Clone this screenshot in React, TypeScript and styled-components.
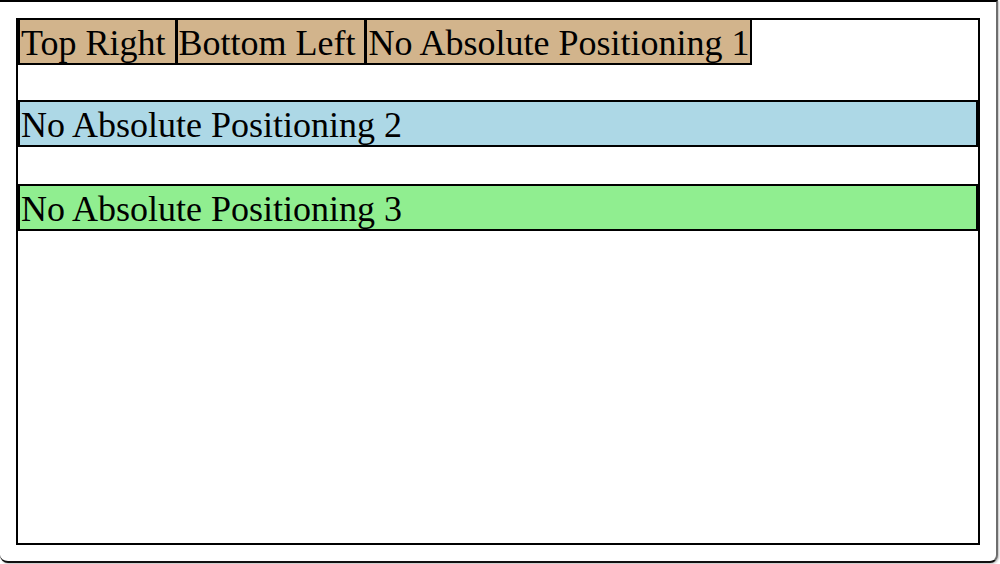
import React from "react";
import styled, { createGlobalStyle } from "styled-components";

const GlobalStyle = createGlobalStyle`
  html, body {
    margin: 0;
    padding: 0;
    background: #ffffff;
  }
  body {
    width: 1000px;
    height: 564px;
    overflow: hidden;
  }
`;

const WindowFrame = styled.div`
  box-sizing: border-box;
  width: 998px;
  height: 563px;
  border-top: 2px solid #000000;
  border-right: 2px solid #6e6e6e;
  border-bottom: 2px solid #111111;
  border-radius: 0 0 8px 8px;
  box-shadow: 1px 1px 2px rgba(0, 0, 0, 0.25);
  background: #ffffff;
  padding: 16px 0 0 16px;
`;

const Container = styled.div`
  box-sizing: border-box;
  width: 964px;
  height: 527px;
  border: 2px solid #000000;
  display: flex;
  flex-direction: column;
  font-family: "Liberation Serif", "Times New Roman", serif;
  font-size: 36px;
  color: #000000;
`;

const TagRow = styled.div`
  display: flex;
  align-items: flex-start;
  margin-top: -2px;
`;

const Tag = styled.div`
  box-sizing: border-box;
  height: 47px;
  padding: 4px 0 0 1px;
  line-height: 39px;
  border: 2px solid #000000;
  background: #d2b48c;
  white-space: pre;
  & + & {
    margin-left: -1px;
  }
`;

const Bar = styled.div<{ $bg: string; $top: number }>`
  box-sizing: border-box;
  height: 47px;
  padding: 4px 0 0 1px;
  line-height: 39px;
  border: 2px solid #000000;
  background: ${(p) => p.$bg};
  margin-top: ${(p) => p.$top}px;
  white-space: pre;
`;

export default function App() {
  return (
    <>
      <GlobalStyle />
      <WindowFrame>
        <Container>
          <TagRow>
            <Tag>{"Top Right "}</Tag>
            <Tag>{"Bottom Left "}</Tag>
            <Tag>{"No Absolute Positioning 1"}</Tag>
          </TagRow>
          <Bar $bg="#add8e6" $top={35}>No Absolute Positioning 2</Bar>
          <Bar $bg="#90ee90" $top={37}>No Absolute Positioning 3</Bar>
        </Container>
      </WindowFrame>
    </>
  );
}
